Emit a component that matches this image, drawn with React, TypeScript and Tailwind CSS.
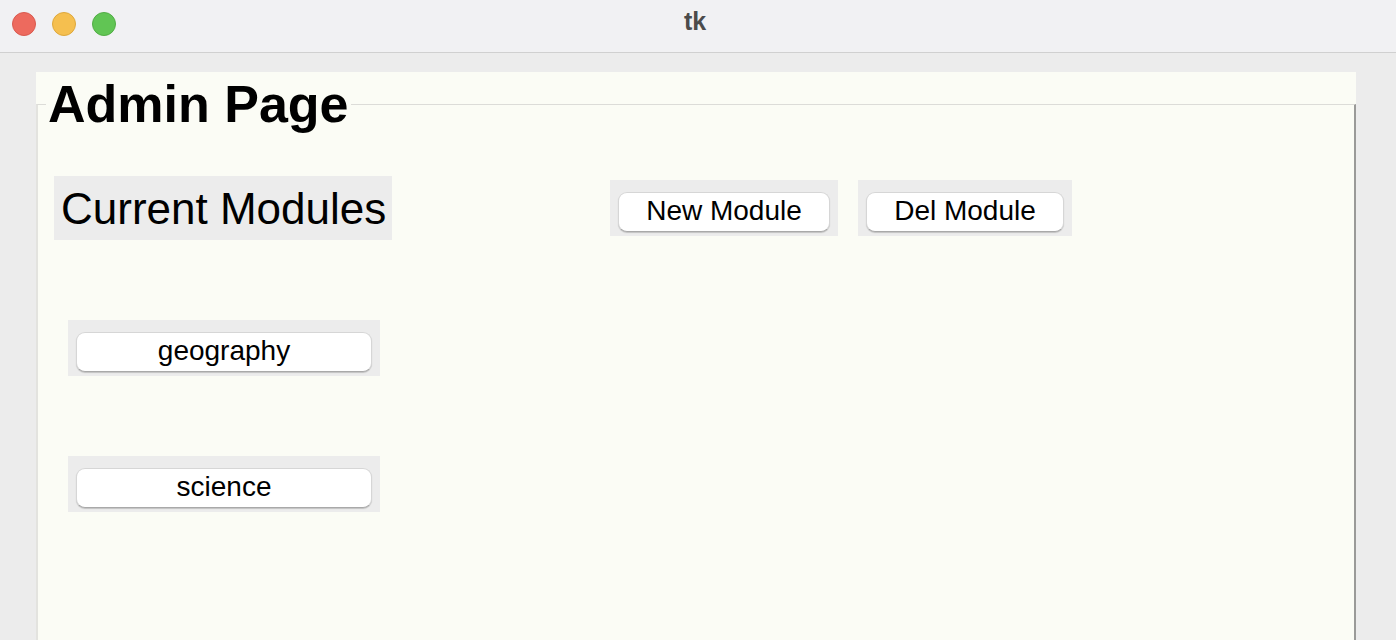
import React from "react";

const font = { fontFamily: '"Liberation Sans", Arial, sans-serif' };

function TkButton({ label, box }: { label: string; box: string }) {
  return (
    <div className={`bg-[#ececec] h-[56px] px-2 pt-3 pb-1 ${box}`}>
      <button className="w-full h-[40px] bg-white rounded-[9px] border border-[#d6d6d6] border-b-[#a9a9a9] shadow-[0_1px_1px_rgba(0,0,0,0.18)] text-[28px] leading-none text-black pb-[3px]">
        {label}
      </button>
    </div>
  );
}

export default function App() {
  const modules = ["geography", "science"];

  return (
    <div className="w-[1396px] h-[640px] overflow-hidden bg-[#ececec] flex flex-col" style={font}>
      {/* title bar */}
      <div className="relative h-[53px] shrink-0 bg-[#f1f1f3] border-b border-[#d0d0d0] flex items-center">
        <div className="flex items-center gap-4 pl-3 pb-[4px]">
          <span className="w-6 h-6 rounded-full bg-[#ed6a5e] border border-[#d95a4f]" />
          <span className="w-6 h-6 rounded-full bg-[#f5bf4f] border border-[#dea83c]" />
          <span className="w-6 h-6 rounded-full bg-[#61c554] border border-[#52ad45]" />
        </div>
        <div className="absolute inset-0 flex items-center justify-center pb-[8px] pr-[6px] text-[25px] font-bold text-[#4b4b4b]">
          tk
        </div>
      </div>

      {/* label frame */}
      <div className="relative mt-[19px] ml-[36px] mr-[40px] flex-1 flex flex-col bg-[#fbfcf5]">
        <div className="h-[32px] shrink-0" />
        <div className="absolute left-[10px] top-[6px] px-[2px] bg-[#fbfcf5] text-[52px] leading-[52px] font-bold text-black">
          Admin Page
        </div>
        <div className="flex-1 border-t border-t-[#dcdcd8] border-l-2 border-l-[#e3e3df] border-r-2 border-r-[#9a9a98]">
          <div className="flex items-center pl-4 mt-[71px]">
            <div className="w-[338px] h-[64px] bg-[#ececec] flex items-center pl-[7px] pt-[2px] text-[44px] leading-none text-black">
              Current Modules
            </div>
            <TkButton label="New Module" box="w-[228px] ml-[218px]" />
            <TkButton label="Del Module" box="w-[214px] ml-5" />
          </div>
          <div className="flex flex-col gap-[80px] pl-[30px] mt-[80px]">
            {modules.map((m) => (
              <TkButton key={m} label={m} box="w-[312px]" />
            ))}
          </div>
        </div>
      </div>
    </div>
  );
}
